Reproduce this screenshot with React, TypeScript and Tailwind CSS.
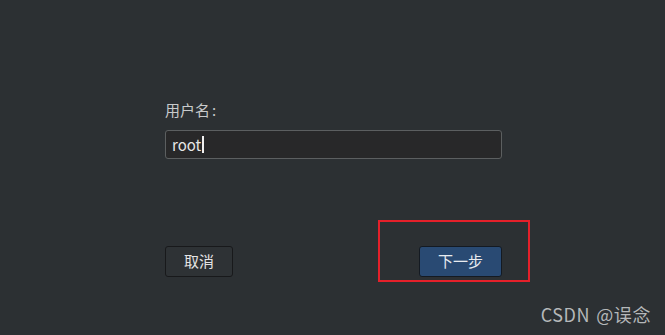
export default function App() {
  return (
    <div
      className="relative h-[335px] w-[665px] overflow-hidden bg-[#2c3033]"
      style={{ fontFamily: '"Noto Sans CJK SC", "Noto Sans", sans-serif' }}
    >
      <div className="ml-[165px] w-[337px] pt-[100px]">
        <label className="block text-[15px] leading-[20px] text-[#c8cacb]">
          用户名<span className="ml-[2px]">:</span>
        </label>
        <div className="mt-[10px] flex h-[29px] items-center rounded-[3px] border border-[#5c5f60] bg-[#282829] px-[6px]">
          <span className="text-[15px] leading-none text-[#e6e6e6]">root</span>
          <span className="ml-[1px] h-[17px] w-[2px] bg-[#f0f0f0]" />
        </div>

        <div className="mt-[87px] flex items-center justify-between">
          <button className="flex h-[31px] w-[68px] items-center justify-center rounded-[3px] border border-[#18191b] bg-[#2e3235] text-[15px] text-[#e4e4e4]">
            取消
          </button>
          <div className="relative">
            <button className="flex h-[31px] w-[83px] items-center justify-center rounded-[3px] border border-[#141a22] bg-[#294a73] text-[15px] text-[#e8ecf0]">
              下一步
            </button>
            <div className="pointer-events-none absolute left-[-41px] top-[-26px] h-[62px] w-[152px] border-2 border-[#e5202a]" />
          </div>
        </div>
      </div>

      <div className="absolute right-[14px] top-[302px] flex gap-[6px] text-[18px] leading-[24px] tracking-[0.6px] text-[#b5b8ba]">
        <span>CSDN</span>
        <span>@误念</span>
      </div>
    </div>
  )
}
